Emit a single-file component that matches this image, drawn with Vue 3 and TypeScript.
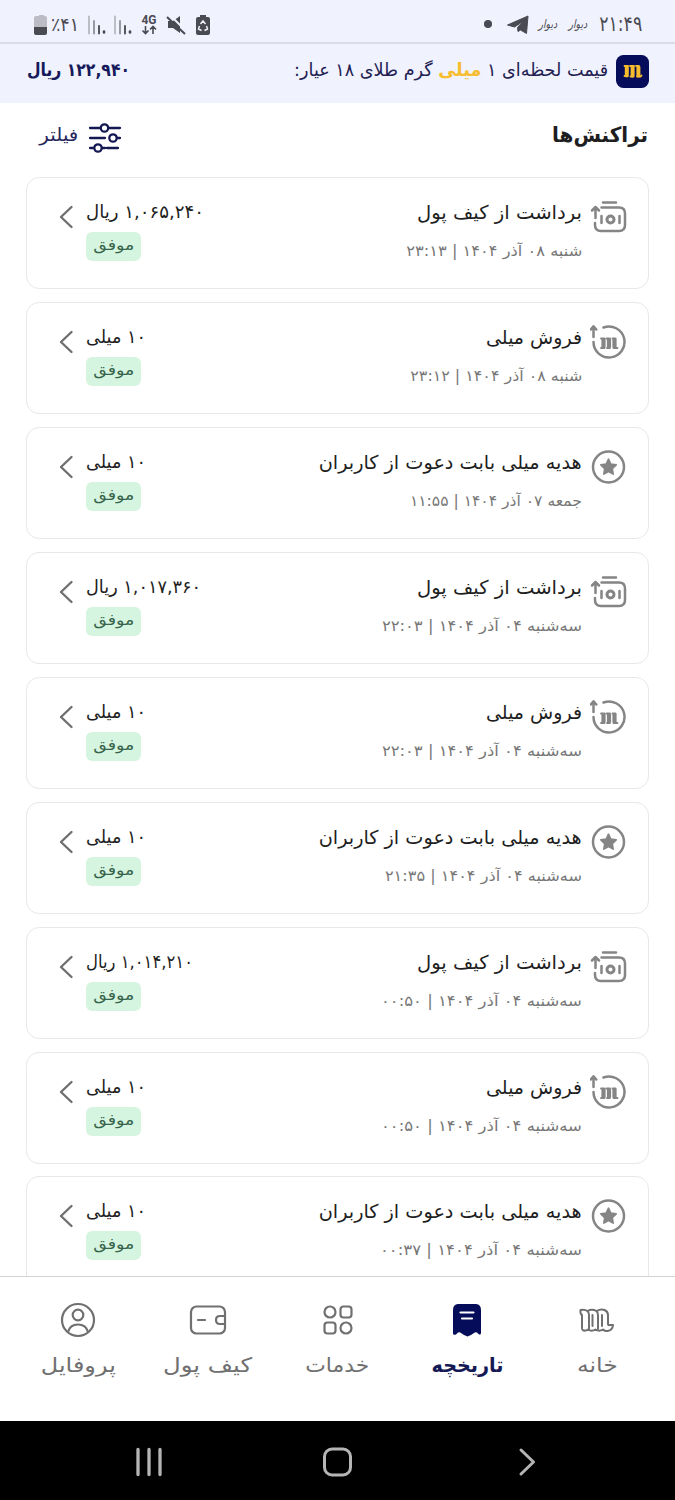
<script setup lang="ts">
import type { Directive } from 'vue'

type Kind = 'withdraw' | 'sell' | 'gift'
interface Transaction {
  kind: Kind
  date: string
  dateWidth: number
  amount: string
  amountWidth: number
}

const titles: Record<Kind, { text: string; width: number }> = {
  withdraw: { text: 'برداشت از کیف پول', width: 165 },
  sell: { text: 'فروش میلی', width: 96 },
  gift: { text: 'هدیه میلی بابت دعوت از کاربران', width: 263 },
}

const transactions: Transaction[] = [
  { kind: 'withdraw', date: 'شنبه ۰۸ آذر ۱۴۰۴ | ۲۳:۱۳', dateWidth: 176, amount: '۱,۰۶۵,۲۴۰ ریال', amountWidth: 118 },
  { kind: 'sell', date: 'شنبه ۰۸ آذر ۱۴۰۴ | ۲۳:۱۲', dateWidth: 172, amount: '۱۰ میلی', amountWidth: 60 },
  { kind: 'gift', date: 'جمعه ۰۷ آذر ۱۴۰۴ | ۱۱:۵۵', dateWidth: 172, amount: '۱۰ میلی', amountWidth: 60 },
  { kind: 'withdraw', date: 'سه‌شنبه ۰۴ آذر ۱۴۰۴ | ۲۲:۰۳', dateWidth: 200, amount: '۱,۰۱۷,۳۶۰ ریال', amountWidth: 115 },
  { kind: 'sell', date: 'سه‌شنبه ۰۴ آذر ۱۴۰۴ | ۲۲:۰۳', dateWidth: 200, amount: '۱۰ میلی', amountWidth: 60 },
  { kind: 'gift', date: 'سه‌شنبه ۰۴ آذر ۱۴۰۴ | ۲۱:۳۵', dateWidth: 197, amount: '۱۰ میلی', amountWidth: 60 },
  { kind: 'withdraw', date: 'سه‌شنبه ۰۴ آذر ۱۴۰۴ | ۰۰:۵۰', dateWidth: 201, amount: '۱,۰۱۴,۲۱۰ ریال', amountWidth: 107 },
  { kind: 'sell', date: 'سه‌شنبه ۰۴ آذر ۱۴۰۴ | ۰۰:۵۰', dateWidth: 201, amount: '۱۰ میلی', amountWidth: 60 },
  { kind: 'gift', date: 'سه‌شنبه ۰۴ آذر ۱۴۰۴ | ۰۰:۳۷', dateWidth: 202, amount: '۱۰ میلی', amountWidth: 60 },
]

const tabs = [
  { id: 'home', label: 'خانه', width: 41 },
  { id: 'history', label: 'تاریخچه', width: 72 },
  { id: 'services', label: 'خدمات', width: 64 },
  { id: 'wallet', label: 'کیف پول', width: 89 },
  { id: 'profile', label: 'پروفایل', width: 75 },
]

// Condenses or widens a line of text horizontally to the given width.
const vFit: Directive<HTMLElement, number> = {
  mounted(el, binding) {
    const natural = el.getBoundingClientRect().width
    if (natural > 0) el.style.transform = `scaleX(${binding.value / natural})`
  },
}
</script>

<template>
  <main class="phone" dir="rtl">
    <div class="status">
      <div class="status-right">
        <span class="clock"><span v-fit="43" class="t from-right">۲۱:۴۹</span></span>
        <span class="brand b1"><span v-fit="21" class="t from-right">دیوار</span></span>
        <span class="brand b2"><span v-fit="21" class="t from-right">دیوار</span></span>
        <svg class="telegram" width="22" height="20" viewBox="0 0 22 20"><path d="M.5 10 21 1 19.500 18.500 13.500 15l-2.500 1.500-.5-4L16 6.500 7.500 12z" fill="#4a4a52" stroke="#4a4a52" stroke-linejoin="round" /></svg>
        <i class="dot"></i>
      </div>
      <svg class="status-left" width="200" height="42" viewBox="0 0 200 42">
        <path d="M19 16h-3q-2 0-2 2v9h13v-9q0-2-2-2h-1v-1h-5z" fill="#bcbcc6" />
        <path d="M14 27h13v6q0 2-2 2h-9q-2 0-2-2z" fill="#4a4a52" />
        <text x="31" y="30.500" textLength="28" lengthAdjust="spacingAndGlyphs" direction="ltr" class="percent">٪۴۱</text>
        <g v-for="x in [68, 94]" :key="x" fill="none" stroke-linecap="round">
          <path :d="`M${x + 1} 16.500v17`" stroke="#b7b7c0" stroke-width="1.800" />
          <path :d="`M${x + 6} 21v12.500`" stroke="#8f8f99" stroke-width="1.800" />
          <path :d="`M${x + 11} 26v7.500`" stroke="#55555e" stroke-width="2" />
          <path :d="`M${x + 16} 31.500v1`" stroke="#4a4a52" stroke-width="2.600" />
        </g>
        <text x="121.500" y="24" textLength="15" lengthAdjust="spacingAndGlyphs" direction="ltr" class="network">4G</text>
        <path d="M125.500 26v7m-3-2.500 3 3 3-3M133 34v-7m-3 2.500 3-3 3 3" fill="none" stroke="#4a4a52" stroke-width="1.600" />
        <path d="M148 21h5l7-5v17l-7-5h-5z" fill="#4a4a52" />
        <path d="m150 15 16 16" stroke="#f0f2fe" stroke-width="2" />
        <path d="m147 17 18 17" stroke="#4a4a52" stroke-width="2" />
        <path d="M180 15h6v2h2q2 0 2 2v14q0 2-2 2h-10q-2 0-2-2v-14q0-2 2-2h2z" fill="#4a4a52" />
        <path d="m180.500 24 2.500-3 2.500 3m1 2 1 3-3 1.500m-3 0-3-1.500 1-3" fill="none" stroke="#f0f2fe" stroke-width="1.500" />
      </svg>
    </div>

    <header class="price-bar">
      <svg class="logo" width="33" height="33" viewBox="0 0 33 33">
        <rect width="33" height="33" rx="7.500" fill="#050c59" />
        <g fill="none" stroke="#f6bb2d" stroke-linecap="round" stroke-linejoin="round">
          <path d="M10.800 12v8.500M16.600 12v8.500M22.400 12v8.500" stroke-width="4" />
          <path d="M8.500 11h3.500M14 11h4M20 11h2.500M8.500 21h3M14.500 21.500h3M21 21.500h3.500l1-1" stroke-width="1.800" />
        </g>
      </svg>
      <p v-fit="314" class="t from-right price-label">قیمت لحظه‌ای ۱ <b>میلی</b> گرم طلای ۱۸ عیار:</p>
      <strong v-fit="103" class="t from-left price">۱۲۲,۹۴۰ ریال</strong>
    </header>

    <div class="heading">
      <h1 v-fit="96" class="t from-right">تراکنش‌ها</h1>
      <button class="filter">
        <svg width="34" height="30" viewBox="0 0 34 30" fill="none" stroke="#141852" stroke-width="2.300" stroke-linecap="round">
          <path d="M2 5h10M21 5h11M2 15h15M29 15h3M2 25h3M14 25h3M19 25h11" />
          <circle cx="16.500" cy="5" r="3.700" /><circle cx="25" cy="15" r="3.700" /><circle cx="10" cy="25" r="3.700" />
        </svg>
        <span v-fit="39" class="t from-right">فیلتر</span>
      </button>
    </div>

    <section class="list">
      <article v-for="(item, i) in transactions" :key="i" class="card">
        <svg class="kind" width="38" height="38" viewBox="0 0 38 38" fill="none" stroke="#858585" stroke-width="2.500" stroke-linecap="round" stroke-linejoin="round">
          <template v-if="item.kind === 'withdraw'">
            <path d="M13 4.500h13M11.500 9.500h17.500q6 0 6 6v11.500q0 6-6 6H11q-6 0-6-6v-2M5.500 20V10M2 12.500l3.500-3.500 3.500 3.500M11.500 18v7M29.500 18v7" />
            <circle cx="20.500" cy="21.500" r="3.500" stroke-width="3" />
          </template>
          <template v-else-if="item.kind === 'sell'">
            <path d="M13.500 4.500a15.500 15.500 0 1 1-10 14.500M3.500 14V3.500M.8 6.500l2.700-3.200L6.300 6.500" />
            <path d="M13.500 15.500v9M19 15.500v9M24.500 15.500v9" stroke-width="4.200" stroke-linecap="butt" />
            <path d="M11 15.500h3.500M16.500 15.500h3.500M22.500 15.500h3M11 25h3.500M17 25h3M23.500 25h4" stroke-width="1.800" />
          </template>
          <template v-else>
            <circle cx="18.500" cy="19" r="15.500" />
            <path d="m18.500 11.200 2.300 4.900 5.400.8-3.900 3.800.9 5.400-4.700-2.600-4.700 2.600.9-5.400-3.900-3.800 5.400-.8z" fill="#858585" stroke-width="1.600" />
          </template>
        </svg>
        <div class="info">
          <h2 v-fit="titles[item.kind].width" class="t from-right">{{ titles[item.kind].text }}</h2>
          <p v-fit="item.dateWidth" class="t from-right date">{{ item.date }}</p>
        </div>
        <div class="value">
          <span v-fit="item.amountWidth" class="t from-left amount">{{ item.amount }}</span>
          <span class="badge"><span v-fit="41" class="t">موفق</span></span>
        </div>
        <svg class="chevron" width="16" height="24" viewBox="0 0 16 24" fill="none" stroke="#6f6f6f" stroke-width="2.400" stroke-linecap="round" stroke-linejoin="round"><path d="M13.500 2 3 12l10.500 10" /></svg>
      </article>
    </section>

    <nav class="tabs">
      <a v-for="tab in tabs" :key="tab.id" class="tab" :class="{ active: tab.id === 'history' }">
        <svg width="38" height="36" viewBox="0 0 38 36" fill="none" stroke="#707070" stroke-width="2.200" stroke-linecap="round" stroke-linejoin="round">
          <g v-if="tab.id === 'home'" stroke-width="2">
            <path d="M2.500 8q4-1 7 1 4.500-2.500 9 0 4.500-2.500 8-1 3.500 1.500 3.500 5v9q0 1.500 1.500 1h3.500q-.5 5.500-5.500 6-3 .2-4.500-1.500-4 2.500-7.500 0-4 2.500-7.500 0-2 1.500-4.500 1-2-1-1.500-4.500V13Q2 12 2.500 8z" />
            <path d="M9.500 9q1.500 1.500 1.500 4v14M14.500 13v11M18.500 9q1.500 1.500 1.500 4v14M24 13v11" />
          </g>
          <path v-else-if="tab.id === 'history'" d="M10 2h18q5 .5 5 6v23q0 2-2 1.500l-2-2q-1.500-.8-3 .5l-3 2-3.500 1.500-3.500-1.500-3-2q-1.500-1.300-3-.5l-2 2Q5 33.500 5 31.500V8q0-5.500 5-6z" fill="#050c59" stroke="none" />
          <template v-else-if="tab.id === 'services'">
            <rect x="21.500" y="4.500" width="11" height="11" rx="3" /><rect x="5.500" y="20.500" width="11" height="11" rx="3" />
            <circle cx="11" cy="10" r="5.500" /><circle cx="27" cy="26" r="5.500" />
          </template>
          <template v-else-if="tab.id === 'wallet'">
            <rect x="2" y="4.500" width="34" height="27" rx="5.500" />
            <path d="M9 18h7M36 14h-5q-4 0-4 4t4 4h5" />
          </template>
          <template v-else>
            <circle cx="19" cy="18" r="16" /><circle cx="19" cy="13" r="5.300" />
            <path d="M9 30q2-7.500 10-7.500T29 30" />
          </template>
          <path v-if="tab.id === 'history'" d="M12.500 10.500h13M14 16.500h10" stroke="#fff" />
        </svg>
        <span v-fit="tab.width" class="t">{{ tab.label }}</span>
      </a>
    </nav>

    <footer class="system">
      <svg width="675" height="79" viewBox="0 0 675 79" fill="none" stroke="#b5b5b5" stroke-width="3" stroke-linecap="round" stroke-linejoin="round">
        <path d="M138 28.500v25M149 28.500v25M160 28.500v25" stroke-width="3.300" />
        <rect x="324.500" y="28" width="26" height="26" rx="7.500" />
        <path d="m521 29 12.500 12L521 53" />
      </svg>
    </footer>
  </main>
</template>

<style>
html, body { background: #fff; overflow: hidden; }
</style>

<style scoped>
.phone { display: flex; flex-direction: column; width: 675px; height: 1500px; overflow: hidden; background: #fff; color: #1e1e22; font-family: "DejaVu Sans", sans-serif; }
h1, h2, p { margin: 0; }
.t { display: inline-block; flex: none; width: max-content; white-space: nowrap; transform-origin: center; }
.from-right { transform-origin: right; }
.from-left { transform-origin: left; }
.status { display: flex; justify-content: space-between; flex: none; height: 42px; padding: 0 33px 0 20px; background: #f0f2fe; border-bottom: 2px solid #dadde8; color: #4a4a52; }
.status-right { display: flex; align-items: center; padding-top: 5px; height: 37px; }
.clock { display: flex; font-size: 21px; line-height: 28px; width: 43px; flex: none; }
.brand { flex: none; display: flex; width: 20px; font-size: 12px; transform: skewX(-12deg); overflow: visible; }
.b1 { margin-right: 11px; }
.b2 { margin-right: 10px; }
.telegram { margin-right: 9px; margin-top: 3px; }
.dot { width: 8px; height: 8px; border-radius: 50%; background: #4a4a52; margin-right: 15px; }
.percent { font-size: 19px; fill: #4a4a52; }
.network { font: bold 13px Roboto, sans-serif; fill: #4a4a52; }
.price-bar { display: flex; flex: none; height: 58.500px; box-sizing: border-box; padding: 11px 26px 0 27px; background: #f0f2fe; color: #1f2152; }
.logo { flex: none; }
.price-label { margin-right: 8px; font-size: 18px; line-height: 30px; }
.price-label b { color: #f6bd2f; }
.price { margin-right: auto; font-size: 18px; line-height: 30px; color: #171a5a; }
.heading { display: flex; justify-content: space-between; flex: none; height: 74.800px; padding: 0 27px 0 26px; }
h1 { font-size: 21px; line-height: 30px; padding-top: 17px; }
.filter { display: flex; align-items: flex-start; padding: 20px 0 0; border: 0; background: none; color: #24265c; font: 18px/26px "DejaVu Sans", sans-serif; direction: rtl; margin-left: 17px; }
.filter svg { margin-left: 10px; }
.filter .t { margin-top: -1px; }
.list { flex: 1; min-height: 0; overflow: hidden; display: flex; flex-direction: column; gap: 12.900px; padding: 0 26px; }
.card { display: flex; flex: none; box-sizing: border-box; height: 112px; border: 1px solid #e8e8e8; border-radius: 13px; padding: 0 20px 0 31px; }
.kind { flex: none; margin-top: 20px; }
.info { margin-right: 8px; padding-top: 21px; display: flex; flex-direction: column; }
h2 { font-size: 19px; line-height: 26px; font-weight: 400; }
.date { margin-top: 16px; font-size: 15px; line-height: 20px; color: #777; }
.value { margin-right: auto; padding-top: 21px; display: flex; flex-direction: column; align-items: flex-end; }
.amount { font-size: 18px; line-height: 26px; }
.badge { display: flex; justify-content: center; width: 55px; height: 29px; margin-top: 7px; border-radius: 6px; background: #d6f5e0; color: #35634a; font-size: 15px; line-height: 27px; }
.chevron { flex: none; margin: 27px 12px 0 0; }
.tabs { display: flex; flex: none; height: 145px; box-sizing: border-box; border-top: 1px solid #d2d2d2; padding: 25px 13px 0; background: #fff; color: #707070; }
.tab { flex: 1; display: flex; flex-direction: column; align-items: center; font-size: 20px; line-height: 30px; }
.tab .t { margin-top: 12px; }
.active { color: #151956; font-weight: 700; }
.system { flex: none; height: 79px; background: #000; direction: ltr; }
.system svg { display: block; }
</style>
